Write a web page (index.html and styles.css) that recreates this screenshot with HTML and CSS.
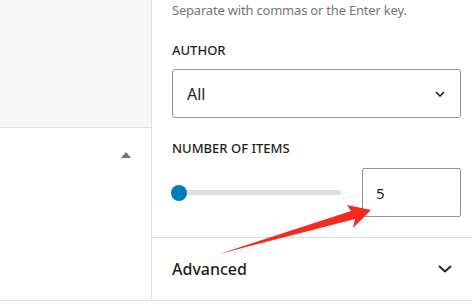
FILE: index.html
```html
<!DOCTYPE html>
<html lang="en">
<head>
    <meta charset="UTF-8">
    <meta name="viewport" content="width=device-width, initial-scale=1.0">
    <title>Block settings</title>
    <link rel="stylesheet" href="styles.css">
</head>
<body>
    <div class="editor">
        <div class="side">
            <div class="side-top"></div>
            <div class="side-row">
                <span class="caret-up"></span>
            </div>
        </div>
        <div class="panel">
            <div class="panel-body">
                <p class="help">Separate with commas or the Enter key.</p>
                <label class="field-label">Author</label>
                <div class="select">
                    <span>All</span>
                    <svg class="select-chev" width="10" height="6" viewBox="0 0 10 6"><path d="M1 1l4 4 4-4" fill="none" stroke="#1e1e1e" stroke-width="1.6"/></svg>
                </div>
                <label class="field-label label-items">Number of items</label>
                <div class="range-row">
                    <input type="range" class="range" min="1" max="100" value="1">
                    <input type="number" class="num" value="5">
                </div>
            </div>
            <div class="panel-head">
                <span>Advanced</span>
                <svg width="14" height="8" viewBox="0 0 14 8"><path d="M1 1l6 5.5 6-5.5" fill="none" stroke="#1e1e1e" stroke-width="1.8"/></svg>
            </div>
        </div>
        <svg class="arrow" width="472" height="306" viewBox="0 0 472 306">
            <polygon points="219,254 355,219 353,228 371,210 347,205 351,211" fill="#f32a1f"/>
        </svg>
    </div>
</body>
</html>
```

FILE: styles.css
```css
*{margin:0;padding:0;box-sizing:border-box;}
body{background:#fff;font-family:"Noto Sans","Open Sans",sans-serif;color:#1e1e1e;}
.editor{position:relative;display:flex;height:301px;border-bottom:1px solid #e0e0e0;}
.side{width:152px;border-right:1px solid #e0e0e0;display:flex;flex-direction:column;}
.side-top{height:128px;background:#f7f7f7;border-bottom:1px solid #e0e0e0;}
.side-row{display:flex;justify-content:flex-end;padding:24px 20px 0 0;}
.caret-up{width:0;height:0;border-left:5.5px solid transparent;border-right:5.5px solid transparent;border-bottom:6px solid #757575;}
.panel{flex:1;display:flex;flex-direction:column;}
.panel-body{padding:1px 11px 20px 20px;}
.help{font-size:13px;line-height:18px;color:#757575;letter-spacing:-0.2px;}
.field-label{display:block;font-size:13px;line-height:18px;font-weight:500;text-transform:uppercase;margin-top:22px;}
.label-items{margin-top:21px;}
.select{margin-top:10px;height:49px;border:1px solid #8d96a0;border-radius:3px;display:flex;align-items:center;justify-content:space-between;padding:0 15px 0 14px;font-size:16px;}
.range-row{margin-top:11px;display:flex;align-items:center;justify-content:space-between;}
.range{-webkit-appearance:none;appearance:none;width:170px;height:16px;margin-left:-1px;background:transparent;outline:none;}
.range::-webkit-slider-runnable-track{height:5px;border-radius:3px;background:#ddd;}
.range::-webkit-slider-thumb{-webkit-appearance:none;width:16px;height:16px;border-radius:50%;background:#007cba;margin-top:-5.5px;}
.num{width:99px;height:49px;border:1px solid #8d96a0;border-radius:2px;padding:0 0 0 13px;font:15px "Noto Sans","Open Sans",sans-serif;color:#1e1e1e;outline:none;-moz-appearance:textfield;}
.num::-webkit-inner-spin-button,.num::-webkit-outer-spin-button{-webkit-appearance:none;margin:0;}
.panel-head{flex:1;border-top:1px solid #e0e0e0;display:flex;align-items:center;justify-content:space-between;padding:0 20px 0 20px;font-size:16px;line-height:20px;font-weight:500;}
.arrow{position:absolute;left:0;top:0;pointer-events:none;}
```
